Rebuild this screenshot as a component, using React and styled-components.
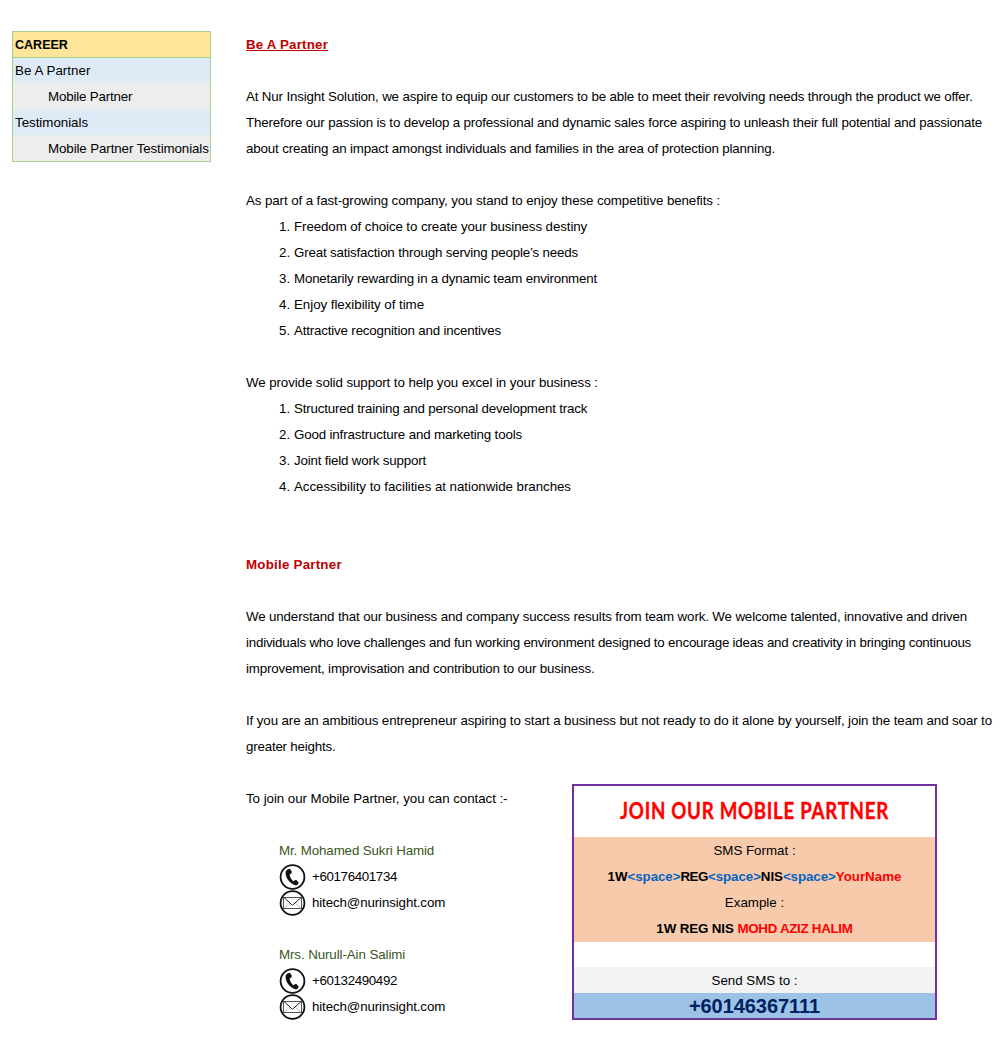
import React from "react";
import styled, { createGlobalStyle } from "styled-components";

const Global = createGlobalStyle`
  body { margin: 0; background: #fff; }
  *, *::before, *::after { box-sizing: border-box; }
`;
const Page = styled.main`
  display: flex;
  align-items: flex-start;
  width: 1000px;
  height: 1050px;
  padding: 31px 0 0 12px;
  overflow: hidden;
  font: 13.333px/26px "Liberation Sans", Arial, sans-serif;
  color: #000;
`;
const Menu = styled.nav`
  width: 199px;
  flex: none;
  border: 1px solid #a8d08d;
`;
const MenuRow = styled.div`
  height: ${(p) => p.$h || 26}px;
  padding-left: ${(p) => (p.$sub ? 35 : 2)}px;
  background: ${(p) => (p.$head ? "#ffe599" : p.$sub ? "#ededed" : "#deebf6")};
  font-weight: ${(p) => (p.$head ? 700 : 400)};
  border-bottom: ${(p) => (p.$head ? "1px solid #a8d08d" : "0")};
  line-height: ${(p) => (p.$head ? 26 : p.$h || 28)}px;
  white-space: nowrap;
`;
const MenuTitle = styled.span`
  display: inline-block;
  transform: scaleX(0.94);
  transform-origin: left;
`;
const Content = styled.article`
  margin-left: 35px;
  padding-top: 1px;
  flex: 1;
`;
const Line = styled.p`
  margin: 0;
  height: 26px;
  padding-left: ${(p) => p.$indent || 0}px;
  white-space: nowrap;
`;
const Heading = styled.h2`
  margin: 0;
  height: 26px;
  font-size: 13.333px;
  color: #c00000;
  text-decoration: ${(p) => (p.$underline ? "underline" : "none")};
`;
const Gap = styled.div`
  height: ${(p) => p.$rows * 26}px;
`;
const List = styled.ol`
  margin: 0;
  padding: 0 0 0 33px;
  list-style: none;
`;
const Item = styled.li`
  display: flex;
  height: 26px;
`;
const Num = styled.span`
  width: 15px;
  flex: none;
`;
const Run = styled.span`
  white-space: nowrap;
  letter-spacing: ${(p) => p.$ls || 0}px;
  color: ${(p) => p.$color || "inherit"};
`;
const Join = styled.section`
  display: flex;
  align-items: flex-start;
`;
const Contacts = styled.div`
  width: 326px;
`;
const Contact = styled.div`
  display: flex;
  align-items: center;
  height: 26px;
  padding-left: 33px;
  gap: 6px;
`;
const Badge = styled.svg`
  width: 27px;
  height: 27px;
  flex: none;
`;
const Card = styled.aside`
  width: 365px;
  height: 236px;
  margin-top: -2px;
  border: 2px solid #7030a0;
  text-align: center;
`;
const CardTitle = styled.h3`
  margin: 0;
  height: 51px;
  font: 700 23.5px/48px Lato, sans-serif;
  letter-spacing: 0.9px;
  color: #f00;
  -webkit-text-stroke: 0.4px #f00;
  transform: scaleX(0.795);
`;
const CardRow = styled.div`
  height: ${(p) => p.$h || 26}px;
  background: ${(p) => p.$bg || "#f7caac"};
  font-weight: ${(p) => (p.$bold ? 700 : 400)};
  line-height: 28px;
  white-space: nowrap;
`;
const Phone = styled(CardRow)`
  color: #002060;
  font-size: 20px;
  line-height: 27px;
`;

function T({ ls, color, children }) {
  return <Run $ls={ls} $color={color}>{children}</Run>;
}
function PhoneIcon() {
  return (
    <Badge viewBox="0 0 27 27">
      <circle cx="13.5" cy="13" r="11.9" fill="#fff" stroke="#111" strokeWidth="1.8" />
      <path d="M6.8 7.2 8.3 5.4 10.8 4.8 12.9 7.8 12.6 9.2 10.7 10.3C10.7 12.9 12.2 15.4 14.4 17.3L16.4 16 17.8 16.2 19.8 19 18.9 20.5 17 21.4C14.3 21.2 11.5 19.3 9.5 16.6C7.2 13.6 6.1 10.1 6.8 7.2Z" fill="#111" />
    </Badge>
  );
}
function MailIcon() {
  return (
    <Badge viewBox="0 0 27 27">
      <circle cx="13.5" cy="13" r="11.9" fill="#fff" stroke="#111" strokeWidth="1.8" />
      <g fill="none" strokeWidth="1">
        <path d="M5 18.5 10.5 13M22 18.5 16.5 13" stroke="#bbb" />
        <rect x="4.5" y="7.5" width="18" height="11" stroke="#555" />
        <path d="M5 7.5 13.5 15.3 22 7.5" stroke="#222" />
      </g>
    </Badge>
  );
}

export default function App() {
  return (
    <Page>
      <Global />
      <Menu>
        <MenuRow $head><MenuTitle>CAREER</MenuTitle></MenuRow>
        <MenuRow $h={25}><T ls={0.06}>Be A Partner</T></MenuRow>
        <MenuRow $sub><T ls={-0.18}>Mobile Partner</T></MenuRow>
        <MenuRow><T ls={-0.02}>Testimonials</T></MenuRow>
        <MenuRow $sub><T ls={-0.1}>Mobile Partner Testimonials</T></MenuRow>
      </Menu>
      <Content>
        <Heading $underline><T ls={0.188}>Be A Partner</T></Heading>
        <Gap $rows={1} />
        <Line><T ls={-0.155}>At Nur Insight Solution, we aspire to equip our customers to be able to meet their revolving needs through the product we offer.</T></Line>
        <Line><T ls={-0.163}>Therefore our passion is to develop a professional and dynamic sales force aspiring to unleash their full potential and passionate</T></Line>
        <Line><T ls={-0.152}>about creating an impact amongst individuals and families in the area of protection planning.</T></Line>
        <Gap $rows={1} />
        <Line><T ls={-0.098}>As part of a fast-growing company, you stand to enjoy these competitive benefits :</T></Line>
        <List>
          <Item><Num>1.</Num><T ls={-0.095}>Freedom of choice to create your business destiny</T></Item>
          <Item><Num>2.</Num><T ls={-0.172}>Great satisfaction through serving people’s needs</T></Item>
          <Item><Num>3.</Num><T ls={-0.193}>Monetarily rewarding in a dynamic team environment</T></Item>
          <Item><Num>4.</Num><T ls={-0.044}>Enjoy flexibility of time</T></Item>
          <Item><Num>5.</Num><T ls={-0.172}>Attractive recognition and incentives</T></Item>
        </List>
        <Gap $rows={1} />
        <Line><T ls={-0.092}>We provide solid support to help you excel in your business :</T></Line>
        <List>
          <Item><Num>1.</Num><T ls={-0.18}>Structured training and personal development track</T></Item>
          <Item><Num>2.</Num><T ls={-0.157}>Good infrastructure and marketing tools</T></Item>
          <Item><Num>3.</Num><T ls={-0.18}>Joint field work support</T></Item>
          <Item><Num>4.</Num><T ls={-0.046}>Accessibility to facilities at nationwide branches</T></Item>
        </List>
        <Gap $rows={2} />
        <Heading><T ls={0.23}>Mobile Partner</T></Heading>
        <Gap $rows={1} />
        <Line><T ls={-0.138}>We understand that our business and company success results from team work. We welcome talented, innovative and driven</T></Line>
        <Line><T ls={-0.21}>individuals who love challenges and fun working environment designed to encourage ideas and creativity in bringing continuous</T></Line>
        <Line><T ls={-0.18}>improvement, improvisation and contribution to our business.</T></Line>
        <Gap $rows={1} />
        <Line><T ls={-0.112}>If you are an ambitious entrepreneur aspiring to start a business but not ready to do it alone by yourself, join the team and soar to</T></Line>
        <Line><T ls={-0.2}>greater heights.</T></Line>
        <Gap $rows={1} />
        <Join>
          <Contacts>
            <Line><T ls={-0.049}>To join our Mobile Partner, you can contact :-</T></Line>
            <Gap $rows={1} />
            <Line $indent={33}><T ls={-0.115} color="#375623">Mr. Mohamed Sukri Hamid</T></Line>
            <Contact><PhoneIcon /><T ls={-0.361}>+60176401734</T></Contact>
            <Contact><MailIcon /><T ls={-0.125}>hitech@nurinsight.com</T></Contact>
            <Gap $rows={1} />
            <Line $indent={33}><T ls={-0.09} color="#375623">Mrs. Nurull-Ain Salimi</T></Line>
            <Contact><PhoneIcon /><T ls={-0.361}>+60132490492</T></Contact>
            <Contact><MailIcon /><T ls={-0.125}>hitech@nurinsight.com</T></Contact>
          </Contacts>
          <Card>
            <CardTitle>JOIN OUR MOBILE PARTNER</CardTitle>
            <CardRow><T>SMS Format :</T></CardRow>
            <CardRow $bold>
              <T>1W</T>
              <T ls={-0.07} color="#0563c1">&lt;space&gt;</T>
              <T ls={-0.45}>REG</T>
              <T ls={-0.07} color="#0563c1">&lt;space&gt;</T>
              <T ls={-0.07}>NIS</T>
              <T ls={-0.07} color="#0563c1">&lt;space&gt;</T>
              <T color="#f00">YourName</T>
            </CardRow>
            <CardRow><T>Example :</T></CardRow>
            <CardRow $bold $h={27}><T ls={-0.12}>1W REG NIS</T> <T ls={-0.28} color="#f00">MOHD AZIZ HALIM</T></CardRow>
            <CardRow $bg="#fff" $h={25} />
            <CardRow $bg="#f2f2f2"><T>Send SMS to :</T></CardRow>
            <Phone $bold $h={25} $bg="#9cc2e5"><T ls={-0.06}>+60146367111</T></Phone>
          </Card>
        </Join>
      </Content>
    </Page>
  );
}
